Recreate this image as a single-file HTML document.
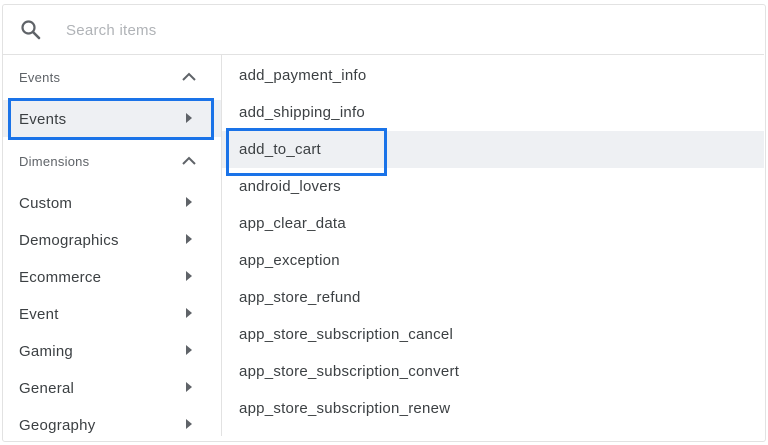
<!DOCTYPE html>
<html><head><meta charset="utf-8"><style>
body{margin:0;width:768px;height:445px;background:#fff;font-family:"Liberation Sans",Arial,sans-serif;position:relative;overflow:hidden}
.box{position:absolute;left:2px;top:4px;width:762px;height:436px;border:1px solid #e2e2e2;border-radius:3px}
.t{position:absolute;white-space:nowrap;color:#3c4043;font-size:15px;line-height:18px;letter-spacing:0.25px}
.h{font-size:13px;color:#5f6368}
.arr{position:absolute;left:186px;width:0;height:0;border-top:5px solid transparent;border-bottom:5px solid transparent;border-left:6px solid #5f6368}
.up{position:absolute;left:181px}
</style></head><body>
<div class="box"></div>
<svg style="position:absolute;left:20px;top:19px" width="22" height="22" viewBox="0 0 22 22"><circle cx="8.5" cy="8.5" r="6" fill="none" stroke="#5f6368" stroke-width="2.2"/><path d="M13 13l6 6" stroke="#5f6368" stroke-width="2.6" stroke-linecap="round"/></svg>
<div class="t" style="left:66px;top:22px;color:#b0b3b7;font-size:15px">Search items</div>
<div style="position:absolute;left:3px;top:54px;width:761px;height:1px;background:#e2e2e2"></div>
<div style="position:absolute;left:221px;top:55px;width:1px;height:381px;background:#e2e2e2"></div>
<div style="position:absolute;left:3px;top:100px;width:218px;height:37px;background:#eef0f3"></div>
<div style="position:absolute;left:222px;top:131px;width:542px;height:37px;background:#eef0f3"></div>
<div class="t h" style="left:19px;top:69px">Events</div>
<svg class="up" style="top:70px" width="16" height="12"><path d="M2 10l6-6 6 6" fill="none" stroke="#5f6368" stroke-width="2"/></svg>
<div class="t" style="left:19px;top:111px">Events</div><div class="arr" style="top:113px"></div>
<div class="t h" style="left:19px;top:153px">Dimensions</div>
<svg class="up" style="top:154px" width="16" height="12"><path d="M2 10l6-6 6 6" fill="none" stroke="#5f6368" stroke-width="2"/></svg>
<div class="t" style="left:19px;top:195px">Custom</div><div class="arr" style="top:197px"></div>
<div class="t" style="left:19px;top:232px">Demographics</div><div class="arr" style="top:234px"></div>
<div class="t" style="left:19px;top:269px">Ecommerce</div><div class="arr" style="top:271px"></div>
<div class="t" style="left:19px;top:306px">Event</div><div class="arr" style="top:308px"></div>
<div class="t" style="left:19px;top:343px">Gaming</div><div class="arr" style="top:345px"></div>
<div class="t" style="left:19px;top:380px">General</div><div class="arr" style="top:382px"></div>
<div class="t" style="left:19px;top:417px">Geography</div><div class="arr" style="top:419px"></div>
<div class="t" style="left:239px;top:67px">add_payment_info</div>
<div class="t" style="left:239px;top:104px">add_shipping_info</div>
<div class="t" style="left:239px;top:141px">add_to_cart</div>
<div class="t" style="left:239px;top:178px">android_lovers</div>
<div class="t" style="left:239px;top:215px">app_clear_data</div>
<div class="t" style="left:239px;top:252px">app_exception</div>
<div class="t" style="left:239px;top:289px">app_store_refund</div>
<div class="t" style="left:239px;top:326px">app_store_subscription_cancel</div>
<div class="t" style="left:239px;top:363px">app_store_subscription_convert</div>
<div class="t" style="left:239px;top:400px">app_store_subscription_renew</div>
<div style="position:absolute;left:8px;top:98px;width:200px;height:36px;border:3px solid #1a73e8"></div>
<div style="position:absolute;left:226px;top:128px;width:155px;height:42px;border:3px solid #1a73e8"></div>
</body></html>
